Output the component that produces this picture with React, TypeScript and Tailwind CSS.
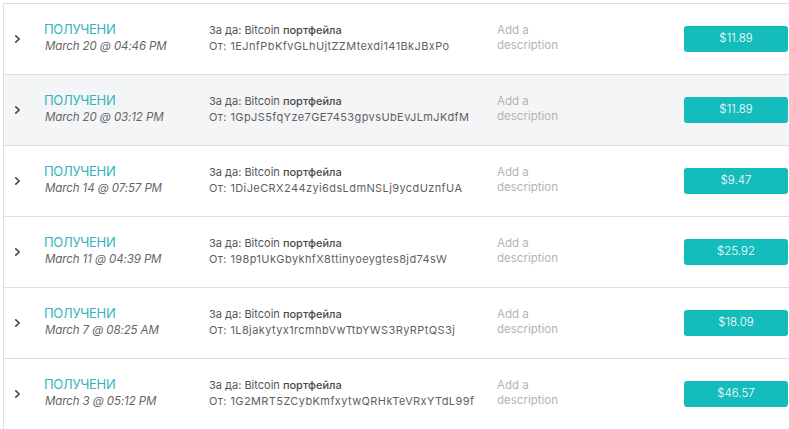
import React from "react";

interface Tx {
  date: string;
  from: string;
  amount: string;
  active?: boolean;
}

const rows: Tx[] = [
  { date: "March 20 @ 04:46 PM", from: "1EJnfPbKfvGLhUjtZZMtexdi141BkJBxPo", amount: "$11.89" },
  { date: "March 20 @ 03:12 PM", from: "1GpJS5fqYze7GE7453gpvsUbEvJLmJKdfM", amount: "$11.89", active: true },
  { date: "March 14 @ 07:57 PM", from: "1DiJeCRX244zyi6dsLdmNSLj9ycdUznfUA", amount: "$9.47" },
  { date: "March 11 @ 04:39 PM", from: "198p1UkGbykhfX8ttinyoeygtes8jd74sW", amount: "$25.92" },
  { date: "March 7 @ 08:25 AM", from: "1L8jakytyx1rcmhbVwTtbYWS3RyRPtQS3j", amount: "$18.09" },
  { date: "March 3 @ 05:12 PM", from: "1G2MRT5ZCybKmfxytwQRHkTeVRxYTdL99f", amount: "$46.57" },
];

const Chevron = () => (
  <svg width="8" height="10" viewBox="0 0 8 10" fill="none">
    <path d="M1.8 1.8L5.2 5L1.8 8.2" stroke="#444" strokeWidth="1.6" strokeLinecap="round" strokeLinejoin="round" />
  </svg>
);

const TxRow: React.FC<{ tx: Tx }> = ({ tx }) => (
  <div
    className={`flex h-[71px] items-center border-b border-[#dedede] ${
      tx.active ? "bg-[#f4f5f7]" : "bg-white"
    }`}
  >
    <div className="flex w-[40px] shrink-0 justify-start pl-[10px]">
      <Chevron />
    </div>
    <div className="w-[165px] shrink-0 pb-[2px]">
      <div className="text-[13px] leading-[15px] tracking-[-0.3px] text-[#35b3bf]">ПОЛУЧЕНИ</div>
      <div className="mt-[2px] pl-[1px] text-[11.5px] italic leading-[15px] tracking-[-0.1px] text-[#666]">{tx.date}</div>
    </div>
    <div className="w-[288px] shrink-0 pb-[2px] text-[11px] leading-[15px] text-[#555]">
      <div>
        За да: Bitcoin <span className="font-medium text-[#4a4a4a]">портфейла</span>
      </div>
      <div className="mt-[1px] tracking-[0.4px] text-[#5f5f5f]">От: {tx.from}</div>
    </div>
    <div className="w-[187px] shrink-0 pb-[3px] text-[11.5px] leading-[15px] text-[#b3b3b3]">
      Add a
      <br />
      description
    </div>
    <div className="flex h-[26px] w-[104px] shrink-0 items-center justify-center rounded-[3px] bg-[#14bcbc] text-[11.5px] font-light text-white">
      {tx.amount}
    </div>
  </div>
);

export default function App() {
  return (
    <div
      className="h-[429px] w-[789px] overflow-hidden bg-white pl-[3px] pt-[3px]"
      style={{ fontFamily: "Inter, 'Noto Sans', sans-serif" }}
    >
      <div className="w-[820px] border-l border-t border-[#dedede]">
        {rows.map((tx, i) => (
          <TxRow key={i} tx={tx} />
        ))}
      </div>
    </div>
  );
}
